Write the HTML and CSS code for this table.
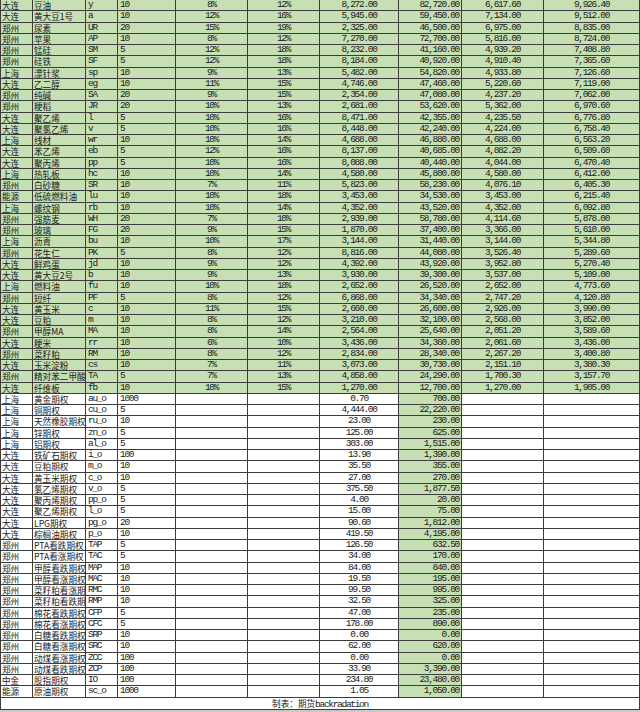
FILE: index.html
```html
<!DOCTYPE html>
<html lang="zh">
<head>
<meta charset="utf-8">
<title>期货保证金表</title>
<link rel="stylesheet" href="styles.css">
</head>
<body>
<table class="sheet">
<tbody>
<tr class="fut"><td>大连</td><td>豆油</td><td>y</td><td>10</td><td>8%</td><td>12%</td><td>8,272.00</td><td>82,720.00</td><td>6,617.60</td><td>9,926.40</td></tr>
<tr class="fut"><td>大连</td><td>黄大豆1号</td><td>a</td><td>10</td><td>12%</td><td>16%</td><td>5,945.00</td><td>59,450.00</td><td>7,134.00</td><td>9,512.00</td></tr>
<tr class="fut"><td>郑州</td><td>尿素</td><td>UR</td><td>20</td><td>15%</td><td>19%</td><td>2,325.00</td><td>46,500.00</td><td>6,975.00</td><td>8,835.00</td></tr>
<tr class="fut"><td>郑州</td><td>苹果</td><td>AP</td><td>10</td><td>8%</td><td>12%</td><td>7,270.00</td><td>72,700.00</td><td>5,816.00</td><td>8,724.00</td></tr>
<tr class="fut"><td>郑州</td><td>锰硅</td><td>SM</td><td>5</td><td>12%</td><td>18%</td><td>8,232.00</td><td>41,160.00</td><td>4,939.20</td><td>7,408.80</td></tr>
<tr class="fut"><td>郑州</td><td>硅铁</td><td>SF</td><td>5</td><td>12%</td><td>18%</td><td>8,184.00</td><td>40,920.00</td><td>4,910.40</td><td>7,365.60</td></tr>
<tr class="fut"><td>上海</td><td>漂针浆</td><td>sp</td><td>10</td><td>9%</td><td>13%</td><td>5,482.00</td><td>54,820.00</td><td>4,933.80</td><td>7,126.60</td></tr>
<tr class="fut"><td>大连</td><td>乙二醇</td><td>eg</td><td>10</td><td>11%</td><td>15%</td><td>4,746.00</td><td>47,460.00</td><td>5,220.60</td><td>7,119.00</td></tr>
<tr class="fut"><td>郑州</td><td>纯碱</td><td>SA</td><td>20</td><td>9%</td><td>15%</td><td>2,354.00</td><td>47,080.00</td><td>4,237.20</td><td>7,062.00</td></tr>
<tr class="fut"><td>郑州</td><td>粳稻</td><td>JR</td><td>20</td><td>10%</td><td>13%</td><td>2,681.00</td><td>53,620.00</td><td>5,362.00</td><td>6,970.60</td></tr>
<tr class="fut"><td>大连</td><td>聚乙烯</td><td>l</td><td>5</td><td>10%</td><td>16%</td><td>8,471.00</td><td>42,355.00</td><td>4,235.50</td><td>6,776.80</td></tr>
<tr class="fut"><td>大连</td><td>聚氯乙烯</td><td>v</td><td>5</td><td>10%</td><td>16%</td><td>8,448.00</td><td>42,240.00</td><td>4,224.00</td><td>6,758.40</td></tr>
<tr class="fut"><td>上海</td><td>线材</td><td>wr</td><td>10</td><td>10%</td><td>14%</td><td>4,688.00</td><td>46,880.00</td><td>4,688.00</td><td>6,563.20</td></tr>
<tr class="fut"><td>大连</td><td>苯乙烯</td><td>eb</td><td>5</td><td>12%</td><td>16%</td><td>8,137.00</td><td>40,685.00</td><td>4,882.20</td><td>6,509.60</td></tr>
<tr class="fut"><td>大连</td><td>聚丙烯</td><td>pp</td><td>5</td><td>10%</td><td>16%</td><td>8,088.00</td><td>40,440.00</td><td>4,044.00</td><td>6,470.40</td></tr>
<tr class="fut"><td>上海</td><td>热轧板</td><td>hc</td><td>10</td><td>10%</td><td>14%</td><td>4,580.00</td><td>45,800.00</td><td>4,580.00</td><td>6,412.00</td></tr>
<tr class="fut"><td>郑州</td><td>白砂糖</td><td>SR</td><td>10</td><td>7%</td><td>11%</td><td>5,823.00</td><td>58,230.00</td><td>4,076.10</td><td>6,405.30</td></tr>
<tr class="fut"><td>能源</td><td>低硫燃料油</td><td>lu</td><td>10</td><td>10%</td><td>18%</td><td>3,453.00</td><td>34,530.00</td><td>3,453.00</td><td>6,215.40</td></tr>
<tr class="fut"><td>上海</td><td>螺纹钢</td><td>rb</td><td>10</td><td>10%</td><td>14%</td><td>4,352.00</td><td>43,520.00</td><td>4,352.00</td><td>6,092.80</td></tr>
<tr class="fut"><td>郑州</td><td>强筋麦</td><td>WH</td><td>20</td><td>7%</td><td>10%</td><td>2,939.00</td><td>58,780.00</td><td>4,114.60</td><td>5,878.00</td></tr>
<tr class="fut"><td>郑州</td><td>玻璃</td><td>FG</td><td>20</td><td>9%</td><td>15%</td><td>1,870.00</td><td>37,400.00</td><td>3,366.00</td><td>5,610.00</td></tr>
<tr class="fut"><td>上海</td><td>沥青</td><td>bu</td><td>10</td><td>10%</td><td>17%</td><td>3,144.00</td><td>31,440.00</td><td>3,144.00</td><td>5,344.80</td></tr>
<tr class="fut"><td>郑州</td><td>花生仁</td><td>PK</td><td>5</td><td>8%</td><td>12%</td><td>8,816.00</td><td>44,080.00</td><td>3,526.40</td><td>5,289.60</td></tr>
<tr class="fut"><td>大连</td><td>鲜鸡蛋</td><td>jd</td><td>10</td><td>9%</td><td>12%</td><td>4,392.00</td><td>43,920.00</td><td>3,952.80</td><td>5,270.40</td></tr>
<tr class="fut"><td>大连</td><td>黄大豆2号</td><td>b</td><td>10</td><td>9%</td><td>13%</td><td>3,930.00</td><td>39,300.00</td><td>3,537.00</td><td>5,109.00</td></tr>
<tr class="fut"><td>上海</td><td>燃料油</td><td>fu</td><td>10</td><td>10%</td><td>18%</td><td>2,652.00</td><td>26,520.00</td><td>2,652.00</td><td>4,773.60</td></tr>
<tr class="fut"><td>郑州</td><td>短纤</td><td>PF</td><td>5</td><td>8%</td><td>12%</td><td>6,868.00</td><td>34,340.00</td><td>2,747.20</td><td>4,120.80</td></tr>
<tr class="fut"><td>大连</td><td>黄玉米</td><td>c</td><td>10</td><td>11%</td><td>15%</td><td>2,660.00</td><td>26,600.00</td><td>2,926.00</td><td>3,990.00</td></tr>
<tr class="fut"><td>大连</td><td>豆粕</td><td>m</td><td>10</td><td>8%</td><td>12%</td><td>3,210.00</td><td>32,100.00</td><td>2,568.00</td><td>3,852.00</td></tr>
<tr class="fut"><td>郑州</td><td>甲醇MA</td><td>MA</td><td>10</td><td>8%</td><td>14%</td><td>2,564.00</td><td>25,640.00</td><td>2,051.20</td><td>3,589.60</td></tr>
<tr class="fut"><td>大连</td><td>粳米</td><td>rr</td><td>10</td><td>6%</td><td>10%</td><td>3,436.00</td><td>34,360.00</td><td>2,061.60</td><td>3,436.00</td></tr>
<tr class="fut"><td>郑州</td><td>菜籽粕</td><td>RM</td><td>10</td><td>8%</td><td>12%</td><td>2,834.00</td><td>28,340.00</td><td>2,267.20</td><td>3,400.80</td></tr>
<tr class="fut"><td>大连</td><td>玉米淀粉</td><td>cs</td><td>10</td><td>7%</td><td>11%</td><td>3,073.00</td><td>30,730.00</td><td>2,151.10</td><td>3,380.30</td></tr>
<tr class="fut"><td>郑州</td><td>精对苯二甲酸</td><td>TA</td><td>5</td><td>7%</td><td>13%</td><td>4,858.00</td><td>24,290.00</td><td>1,700.30</td><td>3,157.70</td></tr>
<tr class="fut"><td>大连</td><td>纤维板</td><td>fb</td><td>10</td><td>10%</td><td>15%</td><td>1,270.00</td><td>12,700.00</td><td>1,270.00</td><td>1,905.00</td></tr>
<tr class="opt"><td>上海</td><td>黄金期权</td><td>au_o</td><td>1000</td><td></td><td></td><td>0.70</td><td>700.00</td><td></td><td></td></tr>
<tr class="opt"><td>上海</td><td>铜期权</td><td>cu_o</td><td>5</td><td></td><td></td><td>4,444.00</td><td>22,220.00</td><td></td><td></td></tr>
<tr class="opt"><td>上海</td><td>天然橡胶期权</td><td>ru_o</td><td>10</td><td></td><td></td><td>23.00</td><td>230.00</td><td></td><td></td></tr>
<tr class="opt"><td>上海</td><td>锌期权</td><td>zn_o</td><td>5</td><td></td><td></td><td>125.00</td><td>625.00</td><td></td><td></td></tr>
<tr class="opt"><td>上海</td><td>铝期权</td><td>al_o</td><td>5</td><td></td><td></td><td>303.00</td><td>1,515.00</td><td></td><td></td></tr>
<tr class="opt"><td>大连</td><td>铁矿石期权</td><td>i_o</td><td>100</td><td></td><td></td><td>13.90</td><td>1,390.00</td><td></td><td></td></tr>
<tr class="opt"><td>大连</td><td>豆粕期权</td><td>m_o</td><td>10</td><td></td><td></td><td>35.50</td><td>355.00</td><td></td><td></td></tr>
<tr class="opt"><td>大连</td><td>黄玉米期权</td><td>c_o</td><td>10</td><td></td><td></td><td>27.00</td><td>270.00</td><td></td><td></td></tr>
<tr class="opt"><td>大连</td><td>氯乙烯期权</td><td>v_o</td><td>5</td><td></td><td></td><td>375.50</td><td>1,877.50</td><td></td><td></td></tr>
<tr class="opt"><td>大连</td><td>聚丙烯期权</td><td>pp_o</td><td>5</td><td></td><td></td><td>4.00</td><td>20.00</td><td></td><td></td></tr>
<tr class="opt"><td>大连</td><td>聚乙烯期权</td><td>l_o</td><td>5</td><td></td><td></td><td>15.00</td><td>75.00</td><td></td><td></td></tr>
<tr class="opt"><td>大连</td><td>LPG期权</td><td>pg_o</td><td>20</td><td></td><td></td><td>90.60</td><td>1,812.00</td><td></td><td></td></tr>
<tr class="opt"><td>大连</td><td>棕榈油期权</td><td>p_o</td><td>10</td><td></td><td></td><td>419.50</td><td>4,195.00</td><td></td><td></td></tr>
<tr class="opt"><td>郑州</td><td>PTA看跌期权</td><td>TAP</td><td>5</td><td></td><td></td><td>126.50</td><td>632.50</td><td></td><td></td></tr>
<tr class="opt"><td>郑州</td><td>PTA看涨期权</td><td>TAC</td><td>5</td><td></td><td></td><td>34.00</td><td>170.00</td><td></td><td></td></tr>
<tr class="opt"><td>郑州</td><td>甲醇看跌期权</td><td>MAP</td><td>10</td><td></td><td></td><td>84.00</td><td>840.00</td><td></td><td></td></tr>
<tr class="opt"><td>郑州</td><td>甲醇看涨期权</td><td>MAC</td><td>10</td><td></td><td></td><td>19.50</td><td>195.00</td><td></td><td></td></tr>
<tr class="opt"><td>郑州</td><td>菜籽粕看涨期</td><td>RMC</td><td>10</td><td></td><td></td><td>99.50</td><td>995.00</td><td></td><td></td></tr>
<tr class="opt"><td>郑州</td><td>菜籽粕看跌期</td><td>RMP</td><td>10</td><td></td><td></td><td>32.50</td><td>325.00</td><td></td><td></td></tr>
<tr class="opt"><td>郑州</td><td>棉花看跌期权</td><td>CFP</td><td>5</td><td></td><td></td><td>47.00</td><td>235.00</td><td></td><td></td></tr>
<tr class="opt"><td>郑州</td><td>棉花看涨期权</td><td>CFC</td><td>5</td><td></td><td></td><td>178.00</td><td>890.00</td><td></td><td></td></tr>
<tr class="opt"><td>郑州</td><td>白糖看跌期权</td><td>SRP</td><td>10</td><td></td><td></td><td>0.00</td><td>0.00</td><td></td><td></td></tr>
<tr class="opt"><td>郑州</td><td>白糖看涨期权</td><td>SRC</td><td>10</td><td></td><td></td><td>62.00</td><td>620.00</td><td></td><td></td></tr>
<tr class="opt"><td>郑州</td><td>动煤看涨期权</td><td>ZCC</td><td>100</td><td></td><td></td><td>0.00</td><td>0.00</td><td></td><td></td></tr>
<tr class="opt"><td>郑州</td><td>动煤看跌期权</td><td>ZCP</td><td>100</td><td></td><td></td><td>33.90</td><td>3,390.00</td><td></td><td></td></tr>
<tr class="opt"><td>中金</td><td>股指期权</td><td>IO</td><td>100</td><td></td><td></td><td>234.80</td><td>23,480.00</td><td></td><td></td></tr>
<tr class="opt"><td>能源</td><td>原油期权</td><td>sc_o</td><td>1000</td><td></td><td></td><td>1.05</td><td>1,050.00</td><td></td><td></td></tr>
<tr class="foot"><td colspan="10"><span class="cjk">制表：期货</span><span class="lat">backradation</span></td></tr>
</tbody>
</table>
</body>
</html>
```

FILE: styles.css
```css
html {
  background: #c9c9c9;
}
body {
  margin: 0;
  background: #c9c9c9;
}
.sheet {
  display: grid;
  width: 640px;
  grid-template-columns: 33px 53px 32px 58px 72px 72px 79px 63px 82px 96px;
  grid-template-rows: repeat(62, 11.25px) 12px;
  background: #ffffff;
  color: #1a1a1a;
  border-spacing: 0;
}
.sheet tbody,
.sheet tr {
  display: contents;
}
.sheet td {
  display: block;
  box-sizing: border-box;
  border-right: 1px solid #3c3c3c;
  border-bottom: 1px solid #3c3c3c;
  padding: 0;
  line-height: 10.25px;
  white-space: nowrap;
  font-family: "Liberation Mono", "Noto Sans CJK SC", monospace;
  font-size: 9.5px;
  letter-spacing: -1.3px;
}
.sheet td:nth-child(1),
.sheet td:nth-child(2) {
  font-family: "Noto Sans CJK SC", sans-serif;
  font-size: 8.6px;
  letter-spacing: 0;
  text-align: left;
}
.sheet td:nth-child(1) {
  padding-left: 1px;
  border-left: 1px solid #3c3c3c;
}
.sheet td:nth-child(2) {
  padding-left: 1px;
  padding-right: 0;
}
.sheet td:nth-child(3),
.sheet td:nth-child(4) {
  text-align: left;
  padding-left: 2px;
}
.sheet td:nth-child(5),
.sheet td:nth-child(6),
.sheet td:nth-child(7),
.sheet td:nth-child(9),
.sheet td:nth-child(10) {
  text-align: center;
}
.sheet td:nth-child(8) {
  text-align: right;
  padding-right: 2px;
}

.fut td {
  background: #c6e0b4;
}
.opt td {
  background: #ffffff;
}
.opt td:nth-child(8) {
  background: #c6e0b4;
}

.sheet .foot td {
  grid-column: 1 / -1;
  text-align: center;
  padding: 0;
  line-height: 11px;
  background: #ffffff;
}
.foot .cjk {
  font-family: "Noto Sans CJK SC", sans-serif;
  font-size: 8.6px;
  letter-spacing: 0;
}
.foot .lat {
  font-family: "Liberation Mono", monospace;
  font-size: 9.5px;
  letter-spacing: -1.3px;
}
```
